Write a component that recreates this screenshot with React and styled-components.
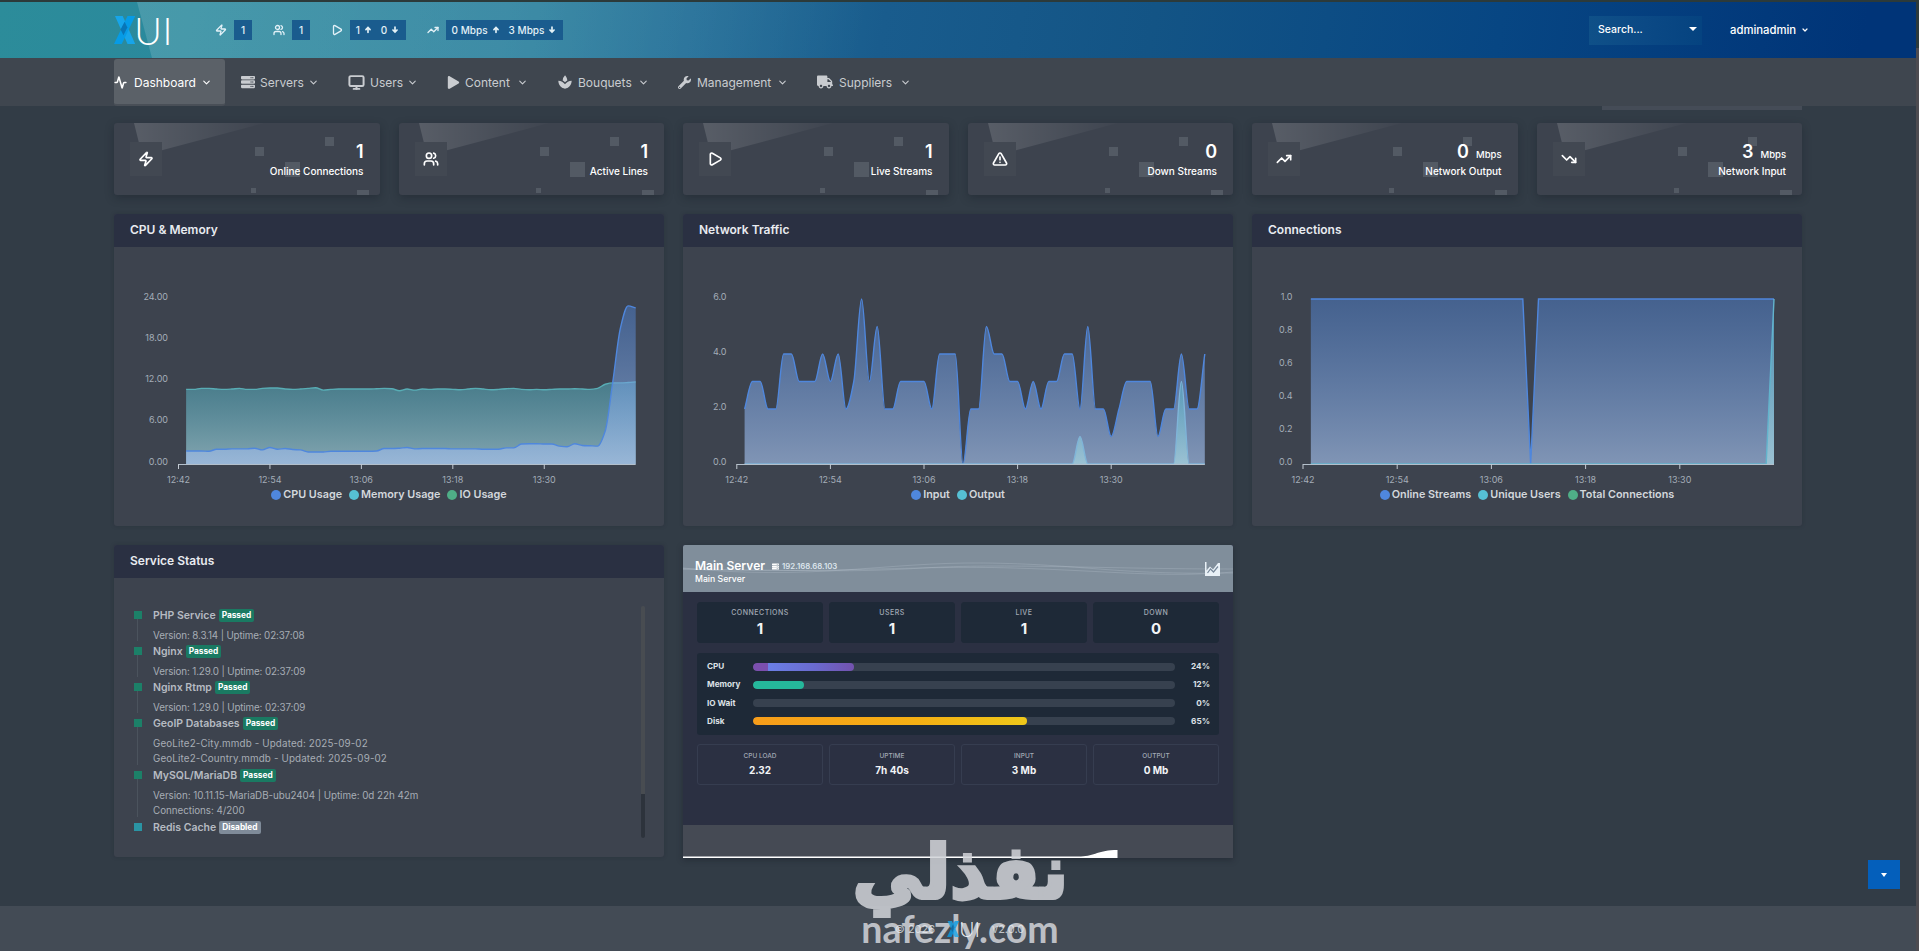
import React from "react";
import styled, { createGlobalStyle } from "styled-components";
import {
  Zap,
  Users,
  Play,
  TrendingUp,
  TrendingDown,
  TriangleAlert,
  ChevronDown,
  Activity,
  Monitor,
} from "lucide-react";
import { FaServer, FaPlay, FaWrench, FaTruck } from "react-icons/fa";
import { MdSpa } from "react-icons/md";
import { TiArrowUpThick, TiArrowDownThick } from "react-icons/ti";

const statCards = [
  { icon: Zap, value: "1", label: "Online Connections" },
  { icon: Users, value: "1", label: "Active Lines" },
  { icon: Play, value: "1", label: "Live Streams" },
  { icon: TriangleAlert, value: "0", label: "Down Streams" },
  { icon: TrendingUp, value: "0", unit: "Mbps", label: "Network Output" },
  { icon: TrendingDown, value: "3", unit: "Mbps", label: "Network Input" },
];

const menu = [
  { icon: Activity, label: "Dashboard", width: 127, text: 62, slot: 20, stroke: 2.8, active: true },
  { icon: FaServer, label: "Servers", width: 107, text: 43, slot: 19, size: 14 },
  { icon: Monitor, label: "Users", width: 99, text: 32, slot: 22, size: 17, stroke: 2.8 },
  { icon: FaPlay, label: "Content", width: 110, text: 47, slot: 18 },
  { icon: MdSpa, label: "Bouquets", width: 121, text: 55, slot: 21, size: 16 },
  { icon: FaWrench, label: "Management", width: 139, text: 75, slot: 19 },
  { icon: FaTruck, label: "Suppliers", width: 120, text: 56, slot: 22, size: 16 },
];

const cpu = [
  1.9, 1.9, 1.9, 1.85, 2.15, 2.15, 2.2, 2.2, 2.2, 2.3, 2.05, 2.4, 2.15, 2.25, 2.1, 2.05, 1.75, 1.75,
  1.75, 1.85, 1.85, 1.85, 1.85, 1.85, 1.85, 1.9, 2.25, 2.25, 2.3, 2.4, 2.2, 2.25, 2.25, 2.25, 2.25,
  2.2, 2.2, 2.2, 2.2, 2.15, 2.15, 2.15, 2.35, 2.35, 2.9, 2.95, 2.95, 2.9, 2.9, 2.6, 2.5, 2.95, 2.7,
  2.65, 2.6, 4.8, 12, 19.8, 23, 22.7,
];
const memory = [
  10.85, 10.85, 11, 11, 10.9, 10.85, 10.9, 11, 10.85, 10.85, 11, 11.05, 11.05, 10.9, 10.85, 10.9, 11,
  11.1, 10.75, 10.85, 10.9, 10.9, 10.9, 10.9, 10.9, 10.95, 11, 10.95, 10.65, 10.9, 10.75, 10.9, 10.85,
  10.9, 10.9, 10.85, 10.8, 10.9, 11, 10.9, 10.8, 10.85, 10.95, 11, 10.85, 10.8, 10.85, 10.8, 10.85,
  10.9, 10.9, 10.95, 10.9, 10.85, 11, 11.6, 11.8, 11.8, 11.85, 11.95,
];
const input = [
  2, 3, 3, 2, 2, 4, 4, 3, 3, 3, 4, 3, 4, 2, 3, 6, 3, 5, 2, 2, 3, 3, 3, 3, 2, 4, 4, 4, 0, 2, 2, 5, 4, 4,
  3, 3, 2, 3, 2, 3, 3, 4, 4, 2, 5, 2, 2, 1, 2, 3, 3, 3, 3, 1, 2, 2, 4, 2, 2, 4,
];
const output = input.map((_, i) => (i === 43 ? 1 : i === 56 ? 3 : 0));
const streams = input.map((_, i) => (i === 28 ? 0 : 1));
const unique = input.map((_, i) => (i === 59 ? 1 : 0));

const blue = "#4f87dd";
const cyan = "#56c0d4";
const green = "#4fae87";

const charts = [
  {
    id: "cpu",
    title: "CPU & Memory",
    max: 24,
    axis: ["24.00", "18.00", "12.00", "6.00", "0.00"],
    labelX: 54,
    tickX: 64.5,
    step: 7.62,
    series: [
      { color: cyan, data: memory, edge: "#58adb5" },
      { color: blue, data: cpu },
    ],
    legend: [["CPU Usage", blue], ["Memory Usage", cyan], ["IO Usage", green]],
  },
  {
    id: "net",
    title: "Network Traffic",
    max: 6,
    axis: ["6.0", "4.0", "2.0", "0.0"],
    labelX: 43.5,
    tickX: 53.8,
    step: 7.8,
    series: [
      { color: blue, data: input },
      { color: cyan, data: output, edge: "#7fb4d8" },
    ],
    legend: [["Input", blue], ["Output", cyan]],
  },
  {
    id: "conn",
    title: "Connections",
    max: 1,
    linear: true,
    axis: ["1.0", "0.8", "0.6", "0.4", "0.2", "0.0"],
    labelX: 40.5,
    tickX: 51,
    step: 7.85,
    series: [
      { color: blue, data: streams },
      { color: cyan, data: unique, edge: "#62b3cc" },
    ],
    legend: [["Online Streams", blue], ["Unique Users", cyan], ["Total Connections", green]],
  },
];

const services = [
  { name: "PHP Service", lines: ["Version: 8.3.14 | Uptime: 02:37:08"], height: 36, spacing: -0.13 },
  { name: "Nginx", lines: ["Version: 1.29.0 | Uptime: 02:37:09"], height: 36, spacing: -0.13 },
  { name: "Nginx Rtmp", lines: ["Version: 1.29.0 | Uptime: 02:37:09"], height: 36, spacing: -0.13 },
  {
    name: "GeoIP Databases",
    lines: ["GeoLite2-City.mmdb - Updated: 2025-09-02", "GeoLite2-Country.mmdb - Updated: 2025-09-02"],
    height: 52,
    spacing: 0.15,
  },
  {
    name: "MySQL/MariaDB",
    lines: ["Version: 10.11.15-MariaDB-ubu2404 | Uptime: 0d 22h 42m", "Connections: 4/200"],
    height: 52,
    spacing: -0.03,
  },
  { name: "Redis Cache", lines: [], height: 20, disabled: true },
];

const meters = [
  { label: "CPU", value: 24, fill: "linear-gradient(90deg, #7b4fae 0 15px, #6b7fe6 15px, #6a6bd0 60%, #7352ae)" },
  { label: "Memory", value: 12, fill: "#25b79b" },
  { label: "IO Wait", value: 0, fill: "#25b79b" },
  { label: "Disk", value: 65, fill: "linear-gradient(90deg, #f79d1a, #f5b014 60%, #efc81a)" },
];

// Monotone cubic path, so the peaks stay on the sampled values.
const buildPath = (points, linear) => {
  const n = points.length;
  const slope = points.slice(1).map((p, i) => (p[1] - points[i][1]) / (p[0] - points[i][0]));
  const tangent = points.map((_, i) => {
    if (i === 0 || i === n - 1) return slope[Math.min(i, n - 2)];
    const a = slope[i - 1];
    const b = slope[i];
    return a * b <= 0 ? 0 : (2 * a * b) / (a + b);
  });
  let d = `M${points[0][0]},${points[0][1]}`;
  for (let i = 1; i < n; i++) {
    const [x0, y0] = points[i - 1];
    const [x1, y1] = points[i];
    const h = (x1 - x0) / 3;
    d += linear
      ? `L${x1},${y1}`
      : `C${x0 + h},${y0 + tangent[i - 1] * h} ${x1 - h},${y1 - tangent[i] * h} ${x1},${y1}`;
  }
  return d;
};

const Chart = ({ chart }) => {
  const top = 52;
  const base = 217;
  const start = chart.tickX + chart.step;
  const end = start + chart.step * 59;
  const times = ["12:42", "12:54", "13:06", "13:18", "13:30"];
  return (
    <ChartSvg viewBox="0 0 549 240">
      {chart.series.map((s, i) => {
        const line = buildPath(
          s.data.map((v, k) => [start + k * chart.step, base - (v / chart.max) * (base - top)]),
          chart.linear
        );
        const peak = base - (Math.max(...s.data) / chart.max) * (base - top);
        return (
          <g key={i}>
            <linearGradient id={chart.id + i} gradientUnits="userSpaceOnUse" x1="0" x2="0" y1={peak} y2={base}>
              <stop offset="0" stopColor={s.color} stopOpacity="0.45" />
              <stop offset="1" stopColor={s.color === blue ? "#a3bfea" : "#a9d8e2"} stopOpacity="0.66" />
            </linearGradient>
            <path d={`${line}L${end},${base}L${start},${base}Z`} fill={`url(#${chart.id + i})`} />
            <path d={line} fill="none" stroke={s.edge || s.color} strokeWidth="1.4" />
          </g>
        );
      })}
      <path d={`M${chart.tickX},${base + 0.5}H${end}`} stroke="#b3bfcb" strokeWidth="1.2" />
      {chart.axis.map((label, i) => (
        <AxisText key={label} x={chart.labelX} y={52.5 + (165 / (chart.axis.length - 1)) * i} textAnchor="end">
          {label}
        </AxisText>
      ))}
      {times.map((t, i) => (
        <g key={t}>
          <path d={`M${chart.tickX + i * 12 * chart.step},217v5`} stroke="#c3cad2" />
          <AxisText x={chart.tickX + i * 12 * chart.step} y={236} textAnchor="middle">
            {t}
          </AxisText>
        </g>
      ))}
    </ChartSvg>
  );
};

const Mark = ({ size }) => (
  <svg width={size * 0.76} height={size} viewBox="0 0 22 29">
    <path d="M1 0h8l13 29h-8z" fill="#17a5ea" />
    <path d="M14 0h8L8 29H0z" fill="#069be6" />
    <path d="M11 6l2.800 6-4 8-3-6z" fill="#0876b8" />
  </svg>
);

const App = () => {
  return (
    <Page>
      <GlobalStyle />
      <TopEdge />
      <Header>
        <HeaderShine />
        <Logo>
          <Mark size={28} />
          <LogoText>UI</LogoText>
        </Logo>
        <Quick>
          <Zap />
          <Chip $width={18}>1</Chip>
        </Quick>
        <Quick>
          <Users />
          <Chip $width={18}>1</Chip>
        </Quick>
        <Quick>
          <Play />
          <Chip $width={56}>
            1 <TiArrowUpThick /> <Space /> 0 <TiArrowDownThick />
          </Chip>
        </Quick>
        <Quick>
          <TrendingUp />
          <Chip $width={117}>
            0 Mbps <TiArrowUpThick /> <Space /> 3 Mbps <TiArrowDownThick />
          </Chip>
        </Quick>
        <Search>
          Search...
          <Caret />
        </Search>
        <Account>
          adminadmin <ChevronDown size={8} strokeWidth={3.6} />
        </Account>
      </Header>
      <Nav>
        {menu.map((item) => (
          <NavItem key={item.label} $width={item.width} $active={item.active}>
            <NavIcon $width={item.slot}>
              <item.icon size={item.size || 13} strokeWidth={item.stroke || 0} />
            </NavIcon>
            <NavLabel $width={item.text}>{item.label}</NavLabel>
            <ChevronDown size={11} strokeWidth={2.4} />
          </NavItem>
        ))}
      </Nav>
      <Content>
        <CardRow>
          {statCards.map((card) => (
            <StatCard key={card.label}>
              <Decoration viewBox="0 0 265 72">
                <defs>
                  <linearGradient id="shine" x1="0" x2="1" y1="0" y2="0">
                    <stop offset="0" stopColor="#fff" stopOpacity="0.14" />
                    <stop offset="1" stopColor="#fff" stopOpacity="0.01" />
                  </linearGradient>
                </defs>
                <path d="M20 0L25 20V32H30L150 0z" fill="url(#shine)" />
                <path
                  d="M141 24h9v9h-9zM211 14h9v9h-9zM171 39h15v15h-15zM137 65h5v5h-5zM243 67h12v5h-12z"
                  fill="#535a64"
                />
              </Decoration>
              <StatIcon>
                <card.icon size={16} strokeWidth={2.5} />
              </StatIcon>
              <StatText>
                <StatValue>
                  {card.value}
                  {card.unit && <small>{card.unit}</small>}
                </StatValue>
                <StatLabel>{card.label}</StatLabel>
              </StatText>
            </StatCard>
          ))}
        </CardRow>
        <PanelRow>
          {charts.map((chart) => (
            <Panel key={chart.id}>
              <PanelTitle>{chart.title}</PanelTitle>
              <Chart chart={chart} />
              <Legend>
                {chart.legend.map(([name, color]) => (
                  <LegendItem key={name} $color={color}>
                    {name}
                  </LegendItem>
                ))}
              </Legend>
            </Panel>
          ))}
        </PanelRow>
        <PanelRow>
          <Panel>
            <PanelTitle>Service Status</PanelTitle>
            <ServiceBody>
              <ServiceList>
                {services.map((s) => (
                  <Service key={s.name} $height={s.height}>
                    <Marker $disabled={s.disabled} />
                    <div>
                      <ServiceName>
                        {s.name} <Badge $disabled={s.disabled}>{s.disabled ? "Disabled" : "Passed"}</Badge>
                      </ServiceName>
                      {s.lines.map((l) => (
                        <ServiceLine key={l} $spacing={s.spacing}>
                          {l}
                        </ServiceLine>
                      ))}
                    </div>
                  </Service>
                ))}
              </ServiceList>
              <Track />
            </ServiceBody>
          </Panel>
          <ServerPanel>
            <ServerHead>
              <Waves viewBox="0 0 550 47" preserveAspectRatio="none">
                <path d="M0 23C130 36 200 17 300 18S430 30 550 28" />
                <path d="M0 24C120 25 160 28 240 23S420 24 550 24" />
                <path d="M0 24C150 29 230 20 330 23S480 33 550 27" />
              </Waves>
              <div>
                <ServerName>
                  Main Server
                  <FaServer size={7} />
                  <span>192.168.68.103</span>
                </ServerName>
                <ServerSub>Main Server</ServerSub>
              </div>
              <svg width="15" height="14" viewBox="0 0 15 14">
                <path d="M0 0h1.500v8.500L5 4.500l3 3L13 1h2v13H0z" fill="#e8f0f6" />
                <path d="M2.500 11L5.500 7l3 3L13 4.500" fill="none" stroke="#77889a" strokeWidth="1.200" />
              </svg>
            </ServerHead>
            <ServerBody>
              <Tiles>
                {[["CONNECTIONS", "1"], ["USERS", "1"], ["LIVE", "1"], ["DOWN", "0"]].map(([label, value]) => (
                  <Tile key={label}>
                    {label}
                    <b>{value}</b>
                  </Tile>
                ))}
              </Tiles>
              <Meters>
                {meters.map((m) => (
                  <Meter key={m.label}>
                    <span>{m.label}</span>
                    <MeterTrack>
                      <MeterFill $fill={m.fill} style={{ width: `${m.value}%` }} />
                    </MeterTrack>
                    <Percent>{m.value}%</Percent>
                  </Meter>
                ))}
              </Meters>
              <Tiles>
                {[["CPU LOAD", "2.32"], ["UPTIME", "7h 40s"], ["INPUT", "3 Mb"], ["OUTPUT", "0 Mb"]].map(
                  ([label, value]) => (
                    <Tile key={label} $outline>
                      {label}
                      <b>{value}</b>
                    </Tile>
                  )
                )}
              </Tiles>
            </ServerBody>
            <Spark viewBox="0 0 550 33" preserveAspectRatio="none">
              <path d="M0 31.500H398C412 31 415 25 434.500 25V33H0z" fill="#fff" />
            </Spark>
          </ServerPanel>
        </PanelRow>
      </Content>
      <Watermark>
        <Arabic>
          <span>نفذلي</span>
        </Arabic>
        <Latin>nafezly.com</Latin>
      </Watermark>
      <Footer>
        <span>© 2026</span>
        <FooterLogo>
          <Mark size={16} />
          UI
        </FooterLogo>
        <span>v2.0.0</span>
      </Footer>
      <DownButton>
        <Caret $small />
      </DownButton>
      <PageScroll />
    </Page>
  );
};

export default App;

const GlobalStyle = createGlobalStyle`
  * {
    box-sizing: border-box;
  }
  body {
    margin: 0;
    overflow: hidden;
    background: #323c46;
    font-family: "Inter", sans-serif;
    color: #fff;
  }
  svg {
    flex: none;
  }
`;

const Page = styled.div`
  position: relative;
  display: flex;
  flex-direction: column;
  height: 951px;
  overflow: hidden;
  background: linear-gradient(#323c46 0 906px, #434b55 906px);
`;
const TopEdge = styled.div`
  height: 2px;
  flex: none;
  background: #2c3a3a;
`;
const Header = styled.header`
  position: relative;
  display: flex;
  align-items: center;
  height: 56px;
  flex: none;
  padding: 0 114px;
  background: linear-gradient(100deg, #2c8c9a 0%, #2a899d 10%, #287e9c 28%, #236f98 36%, #195c8d 46%, #135485 60%, #074683 78%, #003478 97%);
`;
const HeaderShine = styled.div`
  position: absolute;
  inset: 0;
  clip-path: polygon(137px 0, 900px 0, 900px 100%, 152px 100%);
  background: linear-gradient(100deg, rgba(255, 255, 255, 0.14) 137px, rgba(255, 255, 255, 0.1) 500px, transparent 860px);
`;
const Logo = styled.div`
  position: relative;
  display: flex;
  align-items: center;
  width: 101px;
`;
const LogoText = styled.span`
  font: 300 38px/30px "Lato", sans-serif;
  letter-spacing: 0.5px;
  margin-left: -1px;
`;
const Quick = styled.div`
  position: relative;
  display: flex;
  align-items: center;
  gap: 7px;
  margin-right: 21px;
  color: #e3f1f7;
  > svg {
    width: 12px;
    height: 12px;
    stroke-width: 2.6;
  }
`;
const Chip = styled.span`
  display: flex;
  align-items: center;
  justify-content: center;
  gap: 3px;
  width: ${(p) => p.$width}px;
  height: 20px;
  background: #1a5c8e;
  font-size: 10px;
  font-weight: 500;
  white-space: nowrap;
`;
const Space = styled.i`
  width: 2px;
`;
const Caret = styled.i`
  border: 4px solid transparent;
  border-top-color: #fff;
  border-bottom: 0;
  ${(p) => p.$small && "border-width: 4px 3.5px 0;"}
`;
const Search = styled.div`
  position: relative;
  display: flex;
  align-items: center;
  justify-content: space-between;
  width: 113px;
  height: 29px;
  margin-left: auto;
  padding: 0 5px 2px 9px;
  font-size: 10.5px;
  font-weight: 500;
  background: linear-gradient(90deg, #0f5088, #0b4985 50%, #054380);
`;
const Account = styled.div`
  position: relative;
  display: flex;
  align-items: center;
  gap: 5px;
  width: 103px;
  padding-left: 28px;
  font-size: 11.3px;
  font-weight: 500;
`;
const Nav = styled.nav`
  display: flex;
  height: 48px;
  flex: none;
  padding: 0 114px;
  background: #3f464f;
`;
const NavItem = styled.div`
  display: flex;
  align-items: center;
  width: ${(p) => p.$width}px;
  margin-top: 1px;
  padding-bottom: 1px;
  color: ${(p) => (p.$active ? "#fff" : "#c9ccd0")};
  ${(p) =>
    p.$active &&
    `width: 111px;
    margin-right: 16px;
    padding: 1px 0 0;
    background: #5b6168;
    border-radius: 3px;
    border-bottom: 2px solid #494f57;`}
`;
const NavIcon = styled.span`
  display: flex;
  width: ${(p) => p.$width}px;
`;
const NavLabel = styled.span`
  width: ${(p) => p.$width + 5}px;
  font-size: 12px;
  white-space: nowrap;
`;
const Content = styled.main`
  display: flex;
  flex-direction: column;
  gap: 19px;
  width: 1688px;
  height: 800px;
  flex: none;
  margin-left: 114px;
  &::before {
    content: "";
    width: 200px;
    height: 4px;
    align-self: flex-end;
    margin-bottom: -6px;
    background: #454c57;
  }
`;
const CardRow = styled.div`
  display: grid;
  grid-template-columns: repeat(6, 1fr);
  gap: 19px;
`;
const StatCard = styled.div`
  position: relative;
  display: flex;
  justify-content: space-between;
  height: 72px;
  padding: 0 16px;
  border-radius: 3px;
  background: #3d434e;
  box-shadow: 0 3px 8px rgba(20, 26, 34, 0.35);
`;
const Decoration = styled.svg`
  position: absolute;
  left: 0;
  top: 0;
  width: 265px;
  height: 72px;
`;
const StatIcon = styled.div`
  position: relative;
  display: flex;
  align-items: center;
  justify-content: center;
  width: 32px;
  height: 34px;
  margin-top: 19px;
  background: #424852;
`;
const StatText = styled.div`
  position: relative;
  text-align: right;
  padding-top: 17px;
`;
const StatValue = styled.div`
  height: 22px;
  font-size: 18px;
  line-height: 23px;
  font-weight: 600;
  small {
    margin-left: 7px;
    font-size: 9.5px;
    line-height: 10px;
    font-weight: 500;
  }
`;
const StatLabel = styled.div`
  font-size: 10px;
  line-height: 18px;
  font-weight: 500;
`;
const PanelRow = styled.div`
  display: grid;
  grid-template-columns: repeat(3, 1fr);
  gap: 19px;
`;
const Panel = styled.section`
  height: 312px;
  background: #3d434e;
  border-radius: 3px;
  box-shadow: 0 0 4px rgba(20, 26, 34, 0.2);
  overflow: hidden;
`;
const PanelTitle = styled.h4`
  height: 33px;
  margin: 0;
  padding-left: 16px;
  line-height: 32px;
  font-size: 12px;
  font-weight: 600;
  color: #e8ebf0;
  background: #2a3042;
`;
const ChartSvg = styled.svg`
  display: block;
  width: 549px;
  height: 240px;
`;
const AxisText = styled.text`
  font-size: 9px;
  fill: #a4adb8;
`;
const Legend = styled.div`
  display: flex;
  justify-content: center;
  gap: 7px;
`;
const LegendItem = styled.span`
  display: flex;
  align-items: center;
  gap: 2px;
  font-size: 10.8px;
  line-height: 15px;
  font-weight: 600;
  color: #d3d7dc;
  &::before {
    content: "";
    width: 10px;
    height: 10px;
    border-radius: 50%;
    background: ${(p) => p.$color};
  }
`;
const ServiceBody = styled.div`
  display: flex;
  justify-content: space-between;
  padding: 27px 19px 0 19px;
`;
const ServiceList = styled.div`
  display: flex;
  flex-direction: column;
`;
const Service = styled.div`
  display: flex;
  gap: 11px;
  height: ${(p) => p.$height}px;
`;
const Marker = styled.i`
  display: flex;
  flex-direction: column;
  align-items: center;
  width: 9px;
  &::before {
    content: "";
    width: 8px;
    height: 8px;
    margin-top: 6px;
    flex: none;
    background: ${(p) => (p.$disabled ? "#2a94a4" : "#1c8068")};
  }
  &::after {
    content: "";
    width: 1px;
    flex: 1;
    background: ${(p) => (p.$disabled ? "none" : "#4b535d")};
  }
`;
const ServiceName = styled.div`
  display: flex;
  align-items: center;
  gap: 3px;
  height: 20px;
  margin-bottom: 4px;
  font-size: 10.5px;
  font-weight: 600;
  color: #b6bbc2;
`;
const Badge = styled.span`
  padding: 0 3px;
  line-height: 13px;
  border-radius: 2px;
  font-size: 8.3px;
  font-weight: 700;
  color: #fff;
  background: ${(p) => (p.$disabled ? "#7f8b99" : "#1a7a62")};
`;
const ServiceLine = styled.div`
  font-size: 9.8px;
  line-height: 15.5px;
  letter-spacing: ${(p) => p.$spacing}px;
  margin-top: -1px;
  color: #a7adb5;
  white-space: nowrap;
`;
const Track = styled.div`
  width: 4px;
  height: 232px;
  margin-top: 1px;
  border-radius: 2px;
  background: linear-gradient(#484c51 0 188px, #2d333c 188px);
`;
const ServerPanel = styled.section`
  display: flex;
  flex-direction: column;
  height: 313px;
  background: #2b3042;
  box-shadow: 0 2px 6px rgba(20, 26, 34, 0.4);
`;
const ServerHead = styled.div`
  position: relative;
  display: flex;
  align-items: center;
  justify-content: space-between;
  height: 47px;
  padding: 0 13px 0 12px;
  background: #808e9b;
  border-radius: 2px 2px 0 0;
  > * {
    position: relative;
  }
`;
const Waves = styled.svg`
  && {
    position: absolute;
  }
  inset: 0;
  width: 100%;
  height: 100%;
  fill: none;
  stroke: rgba(210, 222, 232, 0.2);
`;
const ServerName = styled.div`
  display: flex;
  align-items: center;
  margin-top: 5px;
  font-size: 12px;
  line-height: 15px;
  font-weight: 600;
  svg {
    margin: 1px 3px 0 7px;
  }
  span {
    padding-top: 1px;
    font-size: 7.8px;
    color: #dce4eb;
  }
`;
const ServerSub = styled.div`
  font-size: 8.7px;
  line-height: 11px;
  font-weight: 500;
`;
const ServerBody = styled.div`
  flex: 1;
  padding: 10px 14px 0 14px;
`;
const Tiles = styled.div`
  display: grid;
  grid-template-columns: repeat(4, 1fr);
  gap: 6px;
`;
const Tile = styled.div`
  display: flex;
  flex-direction: column;
  align-items: center;
  height: 41px;
  padding-top: ${(p) => (p.$outline ? 6 : 5)}px;
  border-radius: 3px;
  background: ${(p) => (p.$outline ? "none" : "#1e2937")};
  border: 1px solid ${(p) => (p.$outline ? "#363d50" : "#1e2937")};
  font-size: ${(p) => (p.$outline ? 6.5 : 7)}px;
  line-height: 10px;
  letter-spacing: ${(p) => (p.$outline ? 0 : 0.5)}px;
  font-weight: 500;
  color: #a2a9b5;
  b {
    font-size: ${(p) => (p.$outline ? 10 : 15)}px;
    line-height: ${(p) => (p.$outline ? 18 : 22)}px;
    letter-spacing: 0;
    color: #f2f4f7;
  }
`;
const Meters = styled.div`
  display: flex;
  flex-direction: column;
  justify-content: space-between;
  height: 82px;
  margin: 10px 0 9px;
  padding: 5px 9px 5px 10px;
  border-radius: 3px;
  background: #1e2937;
`;
const Meter = styled.div`
  display: grid;
  grid-template-columns: 46px 422px 1fr;
  align-items: center;
  font-size: 8.2px;
  line-height: 17px;
  font-weight: 700;
  color: #dde1e6;
`;
const MeterTrack = styled.div`
  height: 8px;
  border-radius: 4px;
  background: #37414f;
  overflow: hidden;
`;
const MeterFill = styled.div`
  height: 8px;
  border-radius: 4px;
  background: ${(p) => p.$fill};
`;
const Percent = styled.span`
  text-align: right;
`;
const Spark = styled.svg`
  display: block;
  width: 100%;
  height: 33px;
  background: #454a54;
`;
const Footer = styled.footer`
  position: relative;
  display: flex;
  align-items: center;
  justify-content: center;
  gap: 12px;
  height: 45px;
  flex: none;
  color: rgba(233, 237, 241, 0.75);
  font-size: 11px;
  svg {
    opacity: 0.8;
  }
`;
const FooterLogo = styled.span`
  display: flex;
  align-items: center;
  font: 300 21px/20px "Lato", sans-serif;
  color: #eef1f4;
`;
const Watermark = styled.div`
  position: absolute;
  left: 852px;
  top: 828px;
  width: 216px;
  height: 123px;
  color: #d2d4d9;
  opacity: 0.85;
  text-align: center;
`;
const Arabic = styled.div`
  display: flex;
  justify-content: center;
  height: 78px;
  font: 700 74px/88px "DejaVu Sans", sans-serif;
  white-space: nowrap;
  -webkit-text-stroke: 4px #d2d4d9;
  span {
    transform: scaleX(0.95);
  }
`;
const Latin = styled.div`
  font: 700 37.5px/46px "Lato", sans-serif;
  white-space: nowrap;
`;
const DownButton = styled.div`
  position: absolute;
  left: 1868px;
  top: 860px;
  display: flex;
  align-items: center;
  justify-content: center;
  width: 32px;
  height: 29px;
  background: #045fbb;
`;
const PageScroll = styled.div`
  position: absolute;
  right: 0;
  top: 0;
  width: 3px;
  height: 100%;
  background: linear-gradient(#2c3a3c 0 48px, #4d4b50 48px);
`;
